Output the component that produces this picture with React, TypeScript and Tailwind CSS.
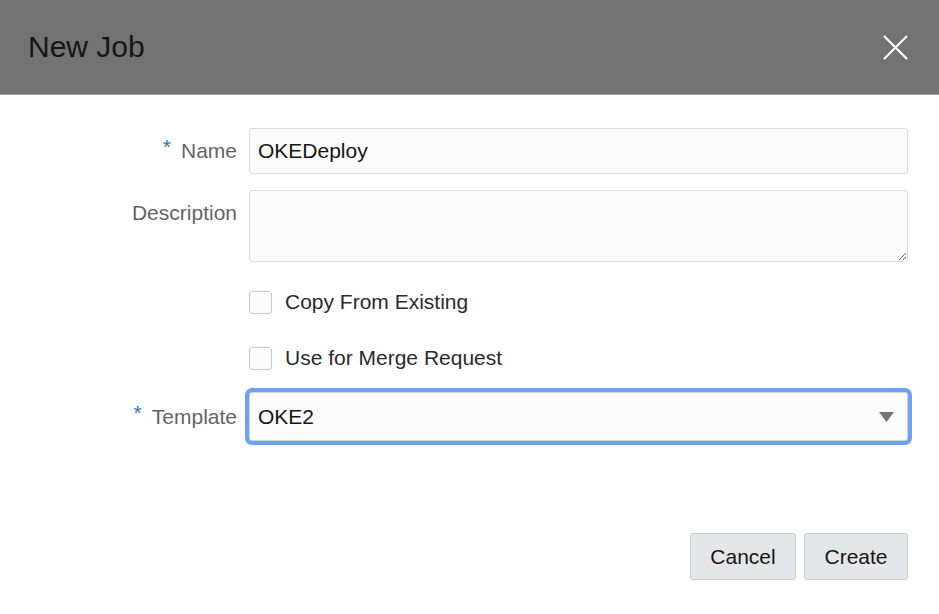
import React, { useState } from "react";

const Req = () => <span className="text-[#2e74b5] text-[21px] mr-[10px] relative -top-[4px]">*</span>;

const App = () => {
  const [name, setName] = useState("OKEDeploy");
  const [desc, setDesc] = useState("");
  const [copy, setCopy] = useState(false);
  const [merge, setMerge] = useState(false);

  return (
    <div className="w-[939px] h-[614px] bg-white flex flex-col font-['Liberation_Sans',Arial,sans-serif]">
      {/* header */}
      <div className="h-[95px] bg-[#737373] border-b border-[#9c9c9c] flex items-center justify-between pl-[28px] pr-[31px]">
        <h1 className="text-[30px] text-[#161616] leading-none">New Job</h1>
        <button className="w-[26px] h-[26px] flex items-center justify-center">
          <svg width="25" height="25" viewBox="0 0 25 25" fill="none" stroke="white" strokeWidth="2" strokeLinecap="round">
            <path d="M1.5 1.5 L23.5 23.5 M23.5 1.5 L1.5 23.5" />
          </svg>
        </button>
      </div>

      {/* form */}
      <div className="flex flex-col pt-[33px] pr-[31px] text-[21px]">
        <div className="flex items-start">
          <label className="w-[249px] pr-[12px] flex justify-end items-center h-[46px] text-[#646464]">
            <Req />Name
          </label>
          <input
            value={name}
            onChange={(e) => setName(e.target.value)}
            className="flex-1 h-[46px] px-[8px] bg-[#fbfbfb] border border-[#dcdcdc] rounded-[3px] text-[#161513] outline-none"
          />
        </div>

        <div className="flex items-start mt-[16px]">
          <label className="w-[249px] pr-[12px] flex justify-end items-center h-[46px] text-[#646464]">Description</label>
          <textarea
            value={desc}
            onChange={(e) => setDesc(e.target.value)}
            className="flex-1 h-[72px] px-[8px] py-[8px] bg-[#fbfbfb] border border-[#dcdcdc] rounded-[3px] text-[#161513] outline-none resize-y"
          />
        </div>

        <div className="flex flex-col pl-[249px] mt-[29px] gap-[34px] text-[#2b2b2b]">
          <label className="flex items-center h-[22px] cursor-pointer" onClick={() => setCopy(!copy)}>
            <span className="w-[23px] h-[23px] bg-[#fbfbfb] border border-[#c8c8c8] rounded-[3px] mr-[13px] flex items-center justify-center text-[14px]">
              {copy ? "✓" : ""}
            </span>
            Copy From Existing
          </label>
          <label className="flex items-center h-[22px] cursor-pointer" onClick={() => setMerge(!merge)}>
            <span className="w-[23px] h-[23px] bg-[#fbfbfb] border border-[#c8c8c8] rounded-[3px] mr-[13px] flex items-center justify-center text-[14px]">
              {merge ? "✓" : ""}
            </span>
            Use for Merge Request
          </label>
        </div>

        <div className="flex items-center mt-[23px]">
          <label className="w-[249px] pr-[12px] flex justify-end items-center h-[48px] text-[#646464]">
            <Req />Template
          </label>
          <div className="flex-1 h-[49px] px-[8px] bg-[#fbfbfb] border border-[#d4d4d4] rounded-[3px] ring-4 ring-[#6aa3f5] flex items-center justify-between text-[#161513]">
            <span>OKE2</span>
            <svg width="15" height="10" viewBox="0 0 15 10" className="mr-[5px]">
              <path d="M0 0 H15 L7.5 10 Z" fill="#747474" />
            </svg>
          </div>
        </div>
      </div>

      {/* footer */}
      <div className="flex justify-end gap-[8px] pr-[31px] mt-auto mb-[34px] text-[21px]">
        <button className="w-[106px] h-[47px] bg-[#e4e7ea] border border-[#c4ccd2] rounded-[3px] text-[#161513]">Cancel</button>
        <button className="w-[104px] h-[47px] bg-[#e4e7ea] border border-[#c4ccd2] rounded-[3px] text-[#161513]">Create</button>
      </div>
    </div>
  );
};

export default App;
